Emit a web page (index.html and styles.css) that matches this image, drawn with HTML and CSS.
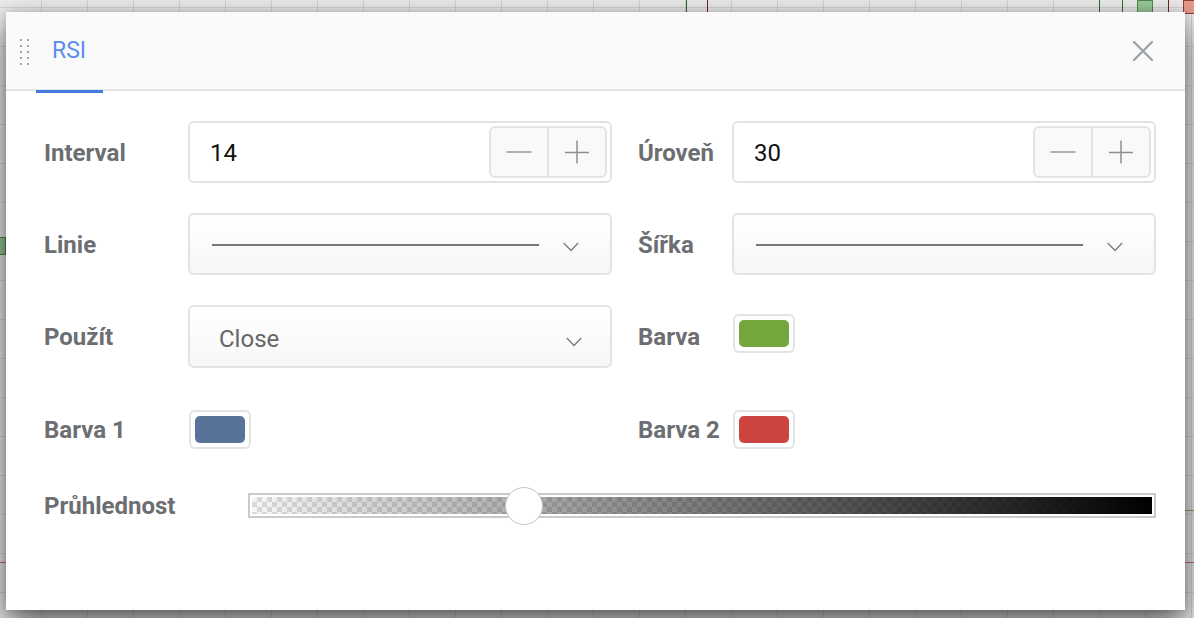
FILE: index.html
```html
<!DOCTYPE html>
<html lang="cs">
<head>
<meta charset="utf-8">
<title>RSI</title>
<link rel="stylesheet" href="styles.css">
</head>
<body>
<div class="chart">
  <span class="wick wick-g" style="left:686px;top:0;height:14px"></span>
  <span class="wick wick-r" style="left:707px;top:0;height:14px"></span>
  <span class="wick wick-g" style="left:1099px;top:0;height:14px"></span>
  <span class="wick wick-g" style="left:1122px;top:0;height:14px"></span>
  <span class="body body-g" style="left:1137px;top:0;width:16px;height:14px"></span>
  <span class="wick wick-r" style="left:1168px;top:0;height:14px"></span>
  <span class="body body-r" style="left:1183px;top:0;width:14px;height:14px"></span>
  <span class="body body-g" style="left:-2px;top:237px;width:8px;height:18px"></span>
  <span class="hline hline-r" style="left:0;top:562px;width:8px"></span>
  <span class="hline hline-r" style="left:1185px;top:562px;width:9px"></span>
  <span class="hline hline-g" style="left:1185px;top:510px;width:9px"></span>
</div>

<div class="dialog">
  <div class="dialog-head">
    <svg class="grip" width="10" height="26" viewBox="0 0 10 26">
      <g fill="#a4a4a4">
        <rect x="0" y="0" width="2" height="2"/><rect x="7" y="0" width="2" height="2"/>
        <rect x="0" y="6" width="2" height="2"/><rect x="7" y="6" width="2" height="2"/>
        <rect x="0" y="12" width="2" height="2"/><rect x="7" y="12" width="2" height="2"/>
        <rect x="0" y="18" width="2" height="2"/><rect x="7" y="18" width="2" height="2"/>
        <rect x="0" y="24" width="2" height="2"/><rect x="7" y="24" width="2" height="2"/>
      </g>
    </svg>
    <div class="tab">RSI</div>
    <svg class="close" width="22" height="22" viewBox="0 0 22 22">
      <path d="M2 2 L20 20 M20 2 L2 20" stroke="#9aa0a6" stroke-width="2.2" stroke-linecap="round" fill="none"/>
    </svg>
  </div>

  <div class="dialog-body">
    <div class="label">Interval</div>
    <div class="field num">
      <span class="num-value">14</span>
      <div class="spin">
        <button class="spin-btn"><svg width="26" height="24" viewBox="0 0 26 24"><path d="M0.5 12 H25.5" stroke="#9a9a9a" stroke-width="1.5"/></svg></button>
        <button class="spin-btn"><svg width="26" height="24" viewBox="0 0 26 24"><path d="M1 12.5 H25 M13 0.5 V23.5" stroke="#8f8f8f" stroke-width="1.5"/></svg></button>
      </div>
    </div>
    <div class="label label-r">Úroveň</div>
    <div class="field num">
      <span class="num-value">30</span>
      <div class="spin">
        <button class="spin-btn"><svg width="26" height="24" viewBox="0 0 26 24"><path d="M0.5 12 H25.5" stroke="#9a9a9a" stroke-width="1.5"/></svg></button>
        <button class="spin-btn"><svg width="26" height="24" viewBox="0 0 26 24"><path d="M1 12.5 H25 M13 0.5 V23.5" stroke="#8f8f8f" stroke-width="1.5"/></svg></button>
      </div>
    </div>

    <div class="label">Linie</div>
    <div class="field select">
      <span class="line-sample"></span>
      <svg class="chev" width="16" height="10" viewBox="0 0 16 10"><path d="M0.8 1 L8 8.5 L15.2 1" stroke="#7a7a7a" stroke-width="1.3" fill="none"/></svg>
    </div>
    <div class="label label-r">Šířka</div>
    <div class="field select">
      <span class="line-sample"></span>
      <svg class="chev" width="16" height="10" viewBox="0 0 16 10"><path d="M0.8 1 L8 8.5 L15.2 1" stroke="#7a7a7a" stroke-width="1.3" fill="none"/></svg>
    </div>

    <div class="label">Použít</div>
    <div class="field select select-text">
      <span class="select-value">Close</span>
      <svg class="chev" width="16" height="10" viewBox="0 0 16 10"><path d="M0.8 1 L8 8.5 L15.2 1" stroke="#7a7a7a" stroke-width="1.3" fill="none"/></svg>
    </div>
    <div class="label label-r">Barva</div>
    <div class="swatch-cell swatch-up"><span class="swatch"><span class="swatch-fill" style="background:#73a63c"></span></span></div>

    <div class="label">Barva 1</div>
    <div class="swatch-cell"><span class="swatch"><span class="swatch-fill" style="background:#577397"></span></span></div>
    <div class="label label-r">Barva 2</div>
    <div class="swatch-cell"><span class="swatch"><span class="swatch-fill" style="background:#cc433f"></span></span></div>

    <div class="label">Průhlednost</div>
    <div class="slider">
      <div class="slider-track"></div>
      <span class="slider-thumb" style="left:274px"></span>
    </div>
  </div>
</div>
</body>
</html>
```

FILE: styles.css
```css
html, body {
  margin: 0;
  padding: 0;
}
body {
  width: 1194px;
  height: 618px;
  overflow: hidden;
  position: relative;
  font-family: Roboto, "Liberation Sans", Arial, sans-serif;
  background-color: #ebebeb;
  background-image:
    repeating-linear-gradient(90deg, transparent 0 41px, #d3d3d3 41px 42px, transparent 42px 46px),
    repeating-linear-gradient(180deg, transparent 0 7px, #d6d6d6 7px 8px, transparent 8px 39px);
}

.chart {
  position: absolute;
  inset: 0;
}
.wick, .body, .hline {
  position: absolute;
  display: block;
}
.wick { width: 1px; }
.wick-g { background: #2f6b2f; }
.wick-r { background: #7b2020; }
.body-g { background: #98c898; border: 1px solid #4e8a4e; box-sizing: border-box; }
.body-r { background: #e79a8c; border: 1px solid #9a3a30; box-sizing: border-box; }
.hline { height: 1px; }
.hline-r { background: #c96a6a; }
.hline-g { background: #7aa85a; }

.dialog {
  position: absolute;
  left: 6px;
  top: 12px;
  width: 1179px;
  height: 598px;
  background: #ffffff;
  box-shadow: 0 14px 30px rgba(0, 0, 0, 0.62), 0 0 8px rgba(0, 0, 0, 0.15);
  display: flex;
  flex-direction: column;
}

.dialog-head {
  height: 77px;
  background: #fafafa;
  border-bottom: 2px solid #e4e4e4;
  display: flex;
  align-items: center;
  padding-left: 14px;
  padding-right: 31px;
}
.grip {
  display: block;
  margin-top: 2px;
}
.tab {
  position: relative;
  height: 100%;
  display: flex;
  align-items: center;
  margin-left: 6px;
  padding: 0 17px 0 16px;
  color: #5b8ced;
  font-size: 23px;
  font-weight: 400;
}
.tab::after {
  content: "";
  position: absolute;
  left: 0;
  right: 0;
  bottom: -4px;
  height: 3px;
  background: #4479de;
}
.close {
  margin-left: auto;
  display: block;
}

.dialog-body {
  padding: 30px 0 0 38px;
  display: grid;
  grid-template-columns: 144px 424px 120px 424px;
  grid-template-rows: 62px 62px 63px 62px 30px;
  row-gap: 30px;
  align-items: center;
}

.label {
  font-size: 24px;
  font-weight: 700;
  color: #6c6e72;
  line-height: 1;
  padding-top: 1px;
}
.label-r {
  padding-left: 26px;
}

.field {
  box-sizing: border-box;
  height: 100%;
  border: 2px solid #e3e3e3;
  border-radius: 6px;
  display: flex;
  align-items: center;
}
.num {
  background: #ffffff;
  padding: 3px 3px 3px 20px;
}
.num-value {
  flex: 1;
  font-size: 24px;
  color: #111111;
  padding-top: 1px;
}
.spin {
  box-sizing: border-box;
  height: 100%;
  width: 118px;
  display: flex;
  border: 2px solid #e3e3e3;
  border-radius: 6px;
  background: #f9f9f9;
  overflow: hidden;
}
.spin-btn {
  flex: 1;
  border: 0;
  margin: 0;
  padding: 0;
  background: transparent;
  display: flex;
  align-items: center;
  justify-content: center;
}
.spin-btn + .spin-btn {
  border-left: 2px solid #e3e3e3;
}
.spin-btn svg {
  display: block;
}

.select {
  background: linear-gradient(#ffffff, #f7f7f7);
  padding: 0 31px 0 22px;
}
.line-sample {
  flex: 1;
  height: 2px;
  background: #777777;
  margin-top: 2px;
}
.chev {
  display: block;
  margin-left: 24px;
  margin-top: 6px;
}
.select-text {
  padding: 0 28px 0 29px;
}
.select-value {
  flex: 1;
  font-size: 24px;
  color: #666666;
  padding-top: 5px;
}
.select-text .chev {
  margin-top: 10px;
}

.swatch-cell {
  padding-left: 1px;
  display: flex;
  align-items: center;
}
.swatch-up {
  margin-top: -6px;
}
.swatch {
  box-sizing: border-box;
  width: 62px;
  height: 39px;
  border: 2px solid #e3e3e3;
  border-radius: 6px;
  background: #ffffff;
  padding: 4px;
  display: flex;
}
.swatch-fill {
  flex: 1;
  border-radius: 5px;
}

.slider {
  grid-column: 2 / 5;
  margin-left: 60px;
  position: relative;
  height: 25px;
  box-sizing: border-box;
  border: 2px solid #c7cbcf;
  padding: 2px;
  background: #ffffff;
}
.slider-track {
  height: 100%;
  background:
    linear-gradient(to right, rgba(0, 0, 0, 0) 0%, #000000 100%),
    repeating-conic-gradient(#d9d9d9 0 25%, #f6f6f6 0 50%) 0 0 / 10px 10px;
}
.slider-thumb {
  position: absolute;
  top: -8px;
  width: 38px;
  height: 38px;
  box-sizing: border-box;
  border-radius: 50%;
  background: #ffffff;
  border: 1.5px solid #c6c6c6;
  margin-left: -19px;
}
```
